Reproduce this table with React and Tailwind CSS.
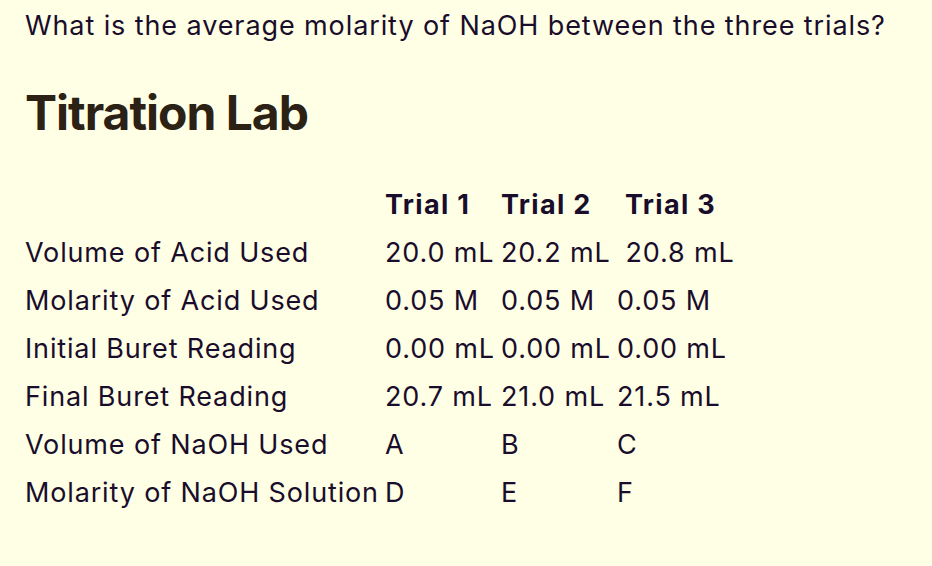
const rows = [
  ["Volume of Acid Used", "20.0 mL", "20.2 mL", "\u00a020.8 mL"],
  ["Molarity of Acid Used", "0.05 M", "0.05 M", "0.05 M"],
  ["Initial Buret Reading", "0.00 mL", "0.00 mL", "0.00 mL"],
  ["Final Buret Reading", "20.7 mL", "21.0 mL", "21.5 mL"],
  ["Volume of NaOH Used", "A", "B", "C"],
  ["Molarity of NaOH Solution", "D", "E", "F"],
];

const App = () => {
  return (
    <div
      className="min-h-[566px] w-full bg-[#ffffe6] pl-[25px] pt-[8px] text-[#1a0d2b]"
      style={{ fontFamily: "Inter, 'Noto Sans', sans-serif" }}
    >
      <p className="text-[27px] leading-[36px] tracking-[0.9px]">
        What is the average molarity of NaOH between the three trials?
      </p>
      <h1 className="mt-[41px] text-[48px] font-bold leading-[56px] tracking-[-1px] text-[#2b2114]">
        Titration Lab
      </h1>
      <div className="mt-[40px] grid grid-cols-[360px_116px_116px_auto] text-[27px] leading-[48px] tracking-[0.85px]">
        <div></div>
        <div className="font-bold tracking-[1.3px]">Trial 1</div>
        <div className="font-bold tracking-[1.3px]">Trial 2</div>
        <div className="pl-[8px] font-bold tracking-[1.3px]">Trial 3</div>
        {rows.map((r) =>
          r.map((cell, i) => (
            <div key={r[0] + i} className="whitespace-pre">
              {cell}
            </div>
          ))
        )}
      </div>
    </div>
  );
};

export default App;
